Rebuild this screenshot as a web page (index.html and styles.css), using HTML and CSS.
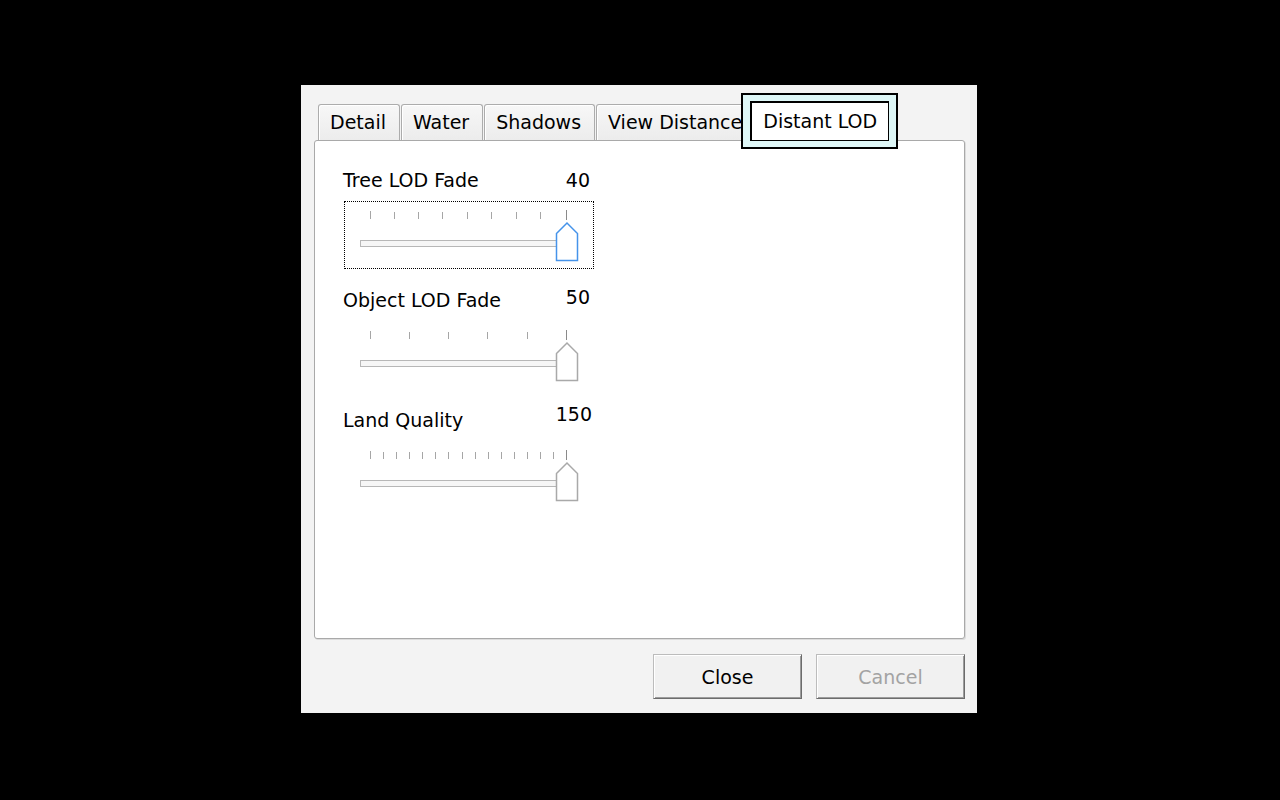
FILE: index.html
```html
<!DOCTYPE html>
<html lang="en">
<head>
    <meta charset="UTF-8">
    <title>Graphics Settings</title>
    <link rel="stylesheet" href="styles.css">
</head>
<body>
    <div class="dialog">
        <div class="tabs">
            <div class="tab">Detail</div>
            <div class="tab">Water</div>
            <div class="tab">Shadows</div>
            <div class="tab">View Distance</div>
            <div class="tab-active"><div class="tab-active-inner">Distant LOD</div></div>
        </div>
        <div class="panel">
            <div class="group">
                <div class="group-head"><span>Tree LOD Fade</span><span class="value">40</span></div>
                <div class="slider focused">
                    <svg width="248" height="66" viewBox="0 0 248 66">
                        <g class="ticks">
                            <line x1="25.5" y1="9" x2="25.5" y2="17"/>
                            <line x1="49.5" y1="10" x2="49.5" y2="17"/>
                            <line x1="73.5" y1="10" x2="73.5" y2="17"/>
                            <line x1="97.5" y1="10" x2="97.5" y2="17"/>
                            <line x1="122.5" y1="10" x2="122.5" y2="17"/>
                            <line x1="146.5" y1="10" x2="146.5" y2="17"/>
                            <line x1="171.5" y1="10" x2="171.5" y2="17"/>
                            <line x1="195.5" y1="10" x2="195.5" y2="17"/>
                            <line class="end" x1="221.5" y1="8" x2="221.5" y2="18"/>
                        </g>
                        <rect class="track" x="15.5" y="38.5" width="196" height="6"/>
                        <polygon class="thumb" points="211.5,31.5 222,21 232.5,31.5 232.5,58.5 211.5,58.5"/>
                    </svg>
                </div>
            </div>
            <div class="group">
                <div class="group-head"><span>Object LOD Fade</span><span class="value up-3">50</span></div>
                <div class="slider">
                    <svg width="248" height="66" viewBox="0 0 248 66">
                        <g class="ticks">
                            <line x1="25.5" y1="9" x2="25.5" y2="17"/>
                            <line x1="64.5" y1="10" x2="64.5" y2="17"/>
                            <line x1="103.5" y1="10" x2="103.5" y2="17"/>
                            <line x1="142.5" y1="10" x2="142.5" y2="17"/>
                            <line x1="182.5" y1="10" x2="182.5" y2="17"/>
                            <line class="end" x1="221.5" y1="8" x2="221.5" y2="18"/>
                        </g>
                        <rect class="track" x="15.5" y="38.5" width="196" height="6"/>
                        <polygon class="thumb" points="211.5,31.5 222,21 232.5,31.5 232.5,58.5 211.5,58.5"/>
                    </svg>
                </div>
            </div>
            <div class="group">
                <div class="group-head"><span>Land Quality</span><span class="value up-6">150</span></div>
                <div class="slider">
                    <svg width="248" height="66" viewBox="0 0 248 66">
                        <g class="ticks">
                            <line x1="25.5" y1="9" x2="25.5" y2="17"/>
                            <line x1="38.5" y1="10" x2="38.5" y2="17"/>
                            <line x1="51.5" y1="10" x2="51.5" y2="17"/>
                            <line x1="64.5" y1="10" x2="64.5" y2="17"/>
                            <line x1="77.5" y1="10" x2="77.5" y2="17"/>
                            <line x1="90.5" y1="10" x2="90.5" y2="17"/>
                            <line x1="103.5" y1="10" x2="103.5" y2="17"/>
                            <line x1="117.5" y1="10" x2="117.5" y2="17"/>
                            <line x1="130.5" y1="10" x2="130.5" y2="17"/>
                            <line x1="143.5" y1="10" x2="143.5" y2="17"/>
                            <line x1="156.5" y1="10" x2="156.5" y2="17"/>
                            <line x1="169.5" y1="10" x2="169.5" y2="17"/>
                            <line x1="182.5" y1="10" x2="182.5" y2="17"/>
                            <line x1="195.5" y1="10" x2="195.5" y2="17"/>
                            <line x1="208.5" y1="10" x2="208.5" y2="17"/>
                            <line class="end" x1="221.5" y1="8" x2="221.5" y2="18"/>
                        </g>
                        <rect class="track" x="15.5" y="38.5" width="196" height="6"/>
                        <polygon class="thumb" points="211.5,31.5 222,21 232.5,31.5 232.5,58.5 211.5,58.5"/>
                    </svg>
                </div>
            </div>
        </div>
        <div class="buttons">
            <button class="btn">Close</button>
            <button class="btn" disabled>Cancel</button>
        </div>
    </div>
</body>
</html>
```

FILE: styles.css
```css
body {
    margin: 0;
    background-color: #000;
    font-family: "DejaVu Sans", Tahoma, sans-serif;
    font-size: 19px;
    color: #000;
}
.dialog {
    width: 676px;
    height: 628px;
    box-sizing: border-box;
    margin: 85px 0 0 301px;
    padding: 8px 12px 0 13px;
    background-color: #f3f3f3;
}
.tabs {
    display: flex;
    align-items: flex-end;
    height: 47px;
    padding-left: 4px;
}
.tab {
    height: 36px;
    box-sizing: border-box;
    padding: 0 13px 0 11px;
    margin-right: 1px;
    line-height: 34px;
    white-space: nowrap;
    border: 1px solid #acacac;
    border-bottom: none;
    border-radius: 3px 3px 0 0;
    background: linear-gradient(#f7f7f7, #ececec);
    box-shadow: inset 1px 1px 0 #fff;
}
.tab-active {
    position: relative;
    z-index: 1;
    height: 56px;
    box-sizing: border-box;
    margin: 0 0 -9px -16px;
    padding: 6px 7px;
    border: 2px solid #000;
    background-color: #def7f7;
}
.tab-active-inner {
    height: 40px;
    box-sizing: border-box;
    padding: 0 11px;
    line-height: 36px;
    white-space: nowrap;
    border: 1px solid #000;
    border-width: 2px 1px 1px 2px;
    background-color: #fff;
}
.panel {
    height: 499px;
    box-sizing: border-box;
    padding: 27px 0 0 28px;
    background-color: #fff;
    border: 1px solid #a9a9a9;
    border-radius: 3px;
    box-shadow: 1px 1px 0 #dcdcdc;
}
.group {
    width: 250px;
    height: 120px;
}
.group-head {
    display: flex;
    justify-content: space-between;
    height: 33px;
    padding-right: 3px;
    line-height: 24px;
}
.value.up-3 {
    margin-top: -3px;
}
.value.up-6 {
    margin-top: -6px;
    margin-right: -2px;
}
.slider {
    width: 250px;
    height: 68px;
    box-sizing: border-box;
    margin-left: 1px;
    border: 1px dotted transparent;
}
.slider.focused {
    border-color: #000;
}
.slider svg {
    display: block;
}
.ticks line {
    stroke: #a6a6a6;
    stroke-width: 1;
}
.ticks line.end {
    stroke: #8a8a8a;
}
.track {
    fill: #f6f6f6;
    stroke: #b7b7b7;
    stroke-width: 1;
}
.thumb {
    fill: #fff;
    stroke: #a9a9a9;
    stroke-width: 1.5;
}
.focused .thumb {
    stroke: #4593ea;
}
.buttons {
    display: flex;
    justify-content: flex-end;
    gap: 14px;
    margin-top: 15px;
}
.btn {
    width: 149px;
    height: 45px;
    font-family: inherit;
    font-size: 19px;
    color: #000;
    background-color: #f1f1f1;
    border: 1px solid;
    border-color: #bcbcbc #6c6c6c #6c6c6c #bcbcbc;
    box-shadow: inset 1px 1px 0 #fff, inset -1px -1px 0 #9c9c9c;
    padding: 0;
}
.btn:disabled {
    color: #a3a3a3;
}
```
